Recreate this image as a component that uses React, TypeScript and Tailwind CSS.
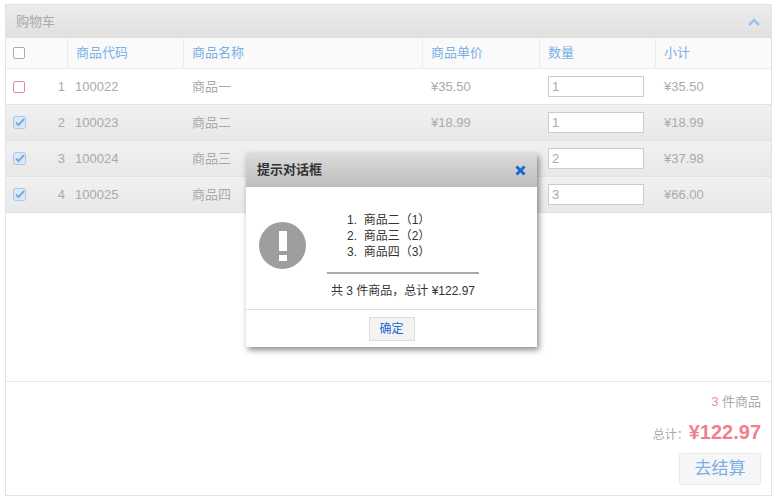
import React from "react";

const rows = [
  { n: 1, code: "100022", name: "商品一", price: "¥35.50", qty: "1", sub: "¥35.50", checked: false },
  { n: 2, code: "100023", name: "商品二", price: "¥18.99", qty: "1", sub: "¥18.99", checked: true },
  { n: 3, code: "100024", name: "商品三", price: "¥18.99", qty: "2", sub: "¥37.98", checked: true },
  { n: 4, code: "100025", name: "商品四", price: "¥22.00", qty: "3", sub: "¥66.00", checked: true },
];

function Check({ checked, red }: { checked?: boolean; red?: boolean }) {
  if (checked)
    return (
      <svg width="13" height="13" viewBox="0 0 13 13">
        <rect x="0.5" y="0.5" width="12" height="12" rx="2" fill="#dbe8f5" stroke="#a9c8e8" />
        <path d="M3 6.5 L5.5 9 L11 3" stroke="#7aaadf" strokeWidth="2" fill="none" />
      </svg>
    );
  return (
    <div className={`w-[12px] h-[12px] rounded-[2px] border bg-white ${red ? "border-[#e58a9c]" : "border-[#aaa]"}`} />
  );
}

export default function App() {
  return (
    <div className="w-[782px] h-[500px] bg-white relative text-[13px] text-[#aaa]" style={{ fontFamily: '"Liberation Sans", Arial, "Noto Sans CJK SC", sans-serif' }}>
      <div className="absolute left-[5px] top-[4px] w-[767px] h-[492px] border border-[#e3e3e3] flex flex-col">
        <div className="h-[33px] flex items-center justify-between px-[10px] bg-gradient-to-b from-[#ececec] to-[#e0e0e0] text-[#aaa]">
          <span>购物车</span>
          <svg width="14" height="10" viewBox="0 0 14 10"><path d="M2 8 L7 3 L12 8" stroke="#9cc4ec" strokeWidth="2.5" fill="none" /></svg>
        </div>
        <div className="h-[31px] flex items-center bg-[#fafafa] text-[#7bb0e6] border-b border-[#eee]">
          <div className="w-[28px] pl-[7px]"><Check /></div>
          <div className="w-[34px] h-full border-r border-[#eee]"></div>
          <div className="w-[116px] pl-[8px] h-full flex items-center border-r border-[#eee]">商品代码</div>
          <div className="w-[239px] pl-[8px] h-full flex items-center border-r border-[#eee]">商品名称</div>
          <div className="w-[117px] pl-[8px] h-full flex items-center border-r border-[#eee]">商品单价</div>
          <div className="w-[116px] pl-[8px] h-full flex items-center border-r border-[#eee]">数量</div>
          <div className="pl-[8px]">小计</div>
        </div>
        {rows.map((r) => (
          <div key={r.n} className={`h-[36px] flex items-center border-b border-[#e2e2e2] ${r.checked ? "bg-gradient-to-b from-[#f1f1f1] to-[#e8e8e8]" : "bg-white"}`}>
            <div className="w-[28px] pl-[7px]"><Check checked={r.checked} red={!r.checked} /></div>
            <div className="w-[34px] text-right pr-[3px]">{r.n}</div>
            <div className="w-[116px] pl-[7px]">{r.code}</div>
            <div className="w-[239px] pl-[8px]">{r.name}</div>
            <div className="w-[117px] pl-[8px]">{r.price}</div>
            <div className="w-[116px] pl-[8px]">
              <div className="w-[96px] h-[21px] border border-[#ccc] bg-white pl-[3px] leading-[19px]">{r.qty}</div>
            </div>
            <div className="pl-[8px]">{r.sub}</div>
          </div>
        ))}
        <div className="flex-1"></div>
        <div className="h-[114px] border-t border-[#e8e8e8] flex flex-col items-end pr-[10px] pt-[10px]">
          <div className="text-[13px]"><span className="text-[#f08a9a]">3</span> 件商品</div>
          <div className="flex items-baseline mt-[5px]"><span className="text-[12px]">总计：</span><span className="text-[20px] font-bold text-[#f0808f]">¥122.97</span></div>
          <div className="mt-[6px] w-[82px] h-[32px] bg-[#f5f6f8] border border-[#eaeaea] rounded-[2px] text-[#7aaee5] text-[17px] flex items-center justify-center">去结算</div>
        </div>
      </div>

      <div className="absolute left-[246px] top-[153px] w-[291px] h-[194px] bg-white shadow-[2px_3px_6px_rgba(0,0,0,0.45)] flex flex-col text-[#333]">
        <div className="h-[34px] bg-gradient-to-b from-[#dcdcdc] to-[#bdbdbd] flex items-center justify-between px-[11px] font-bold text-[#333]">
          <span>提示对话框</span>
          <svg width="11" height="11" viewBox="0 0 11 11"><path d="M1.5 1.5 L9.5 9.5 M9.5 1.5 L1.5 9.5" stroke="#1a66d6" strokeWidth="3" /></svg>
        </div>
        <div className="flex-1 flex items-start pt-[25px] pl-[13px]">
          <div className="w-[47px] h-[47px] rounded-full bg-[#9e9e9e] flex flex-col items-center justify-center mt-[10px]">
            <div className="w-[8px] h-[20px] bg-white"></div>
            <div className="w-[8px] h-[6px] bg-white mt-[4px]"></div>
          </div>
          <div className="ml-[21px] w-[152px] flex flex-col">
            <div className="text-[12px] leading-[16px] pl-[20px]">
              <div>1.&nbsp; 商品二（1）</div>
              <div>2.&nbsp; 商品三（2）</div>
              <div>3.&nbsp; 商品四（3）</div>
            </div>
            <div className="w-[152px] h-[2px] bg-[#aaa] mt-[12px]"></div>
            <div className="text-[12px] mt-[8px] text-center">共 3 件商品，总计 ¥122.97</div>
          </div>
        </div>
        <div className="h-[38px] border-t border-[#ddd] flex items-center justify-center">
          <div className="w-[46px] h-[24px] bg-[#f3f3f3] border border-[#ddd] text-[#1a66d6] text-[12px] flex items-center justify-center">确定</div>
        </div>
      </div>
    </div>
  );
}
